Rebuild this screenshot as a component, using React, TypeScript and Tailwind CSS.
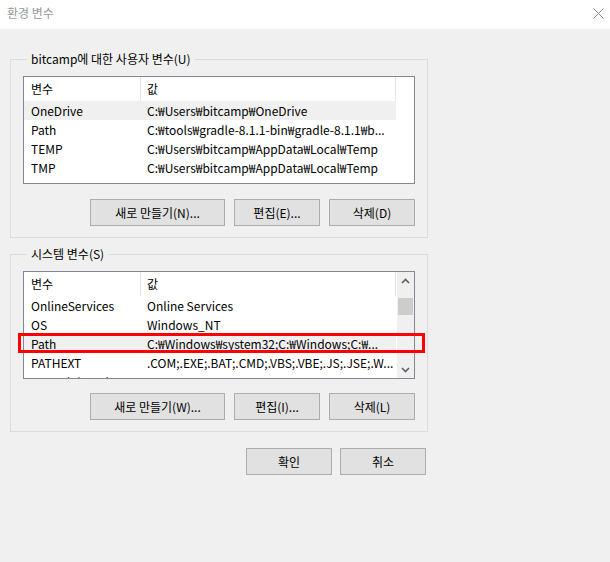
import * as React from "react";

type Row = [string, string];

const userVars: Row[] = [
  ["OneDrive", "C:₩Users₩bitcamp₩OneDrive"],
  ["Path", "C:₩tools₩gradle-8.1.1-bin₩gradle-8.1.1₩b..."],
  ["TEMP", "C:₩Users₩bitcamp₩AppData₩Local₩Temp"],
  ["TMP", "C:₩Users₩bitcamp₩AppData₩Local₩Temp"],
];

const systemVars: Row[] = [
  ["OnlineServices", "Online Services"],
  ["OS", "Windows_NT"],
  ["Path", "C:₩Windows₩system32;C:₩Windows;C:₩..."],
  ["PATHEXT", ".COM;.EXE;.BAT;.CMD;.VBS;.VBE;.JS;.JSE;.W..."],
  ["PSModulePath", ""],
];

function Chevron({ up }: { up?: boolean }) {
  return (
    <svg width="9" height="6" viewBox="0 0 9 6" fill="none">
      <path
        d={up ? "M1 5 L4.5 1.5 L8 5" : "M1 1 L4.5 4.5 L8 1"}
        stroke="#606060"
        strokeWidth={1.6}
      />
    </svg>
  );
}

function VarList({
  rows,
  highlight,
  scroll = false,
}: {
  rows: Row[];
  highlight: number;
  scroll?: boolean;
}) {
  return (
    <div className="flex h-[108px] w-[392px] overflow-hidden border border-[#828790] bg-white">
      <div className="flex w-[372px] flex-col">
        <div className="flex h-[24px] shrink-0">
          <div className="flex w-[117px] items-center border-r border-[#e5e5e5] pl-[7px]">변수</div>
          <div className="flex flex-1 items-center border-r border-[#e5e5e5] pl-[6px]">값</div>
        </div>
        {rows.map((r, i) => (
          <div
            key={i}
            className={`flex h-[19px] shrink-0 items-center whitespace-nowrap ${
              i === highlight ? "bg-[#f0f0f0]" : ""
            }`}
          >
            <div className="w-[117px] overflow-hidden pl-[7px]">{r[0]}</div>
            <div className="flex-1 overflow-hidden pl-[6px]">{r[1]}</div>
          </div>
        ))}
      </div>
      {scroll && (
        <div className="ml-[1px] flex w-[17px] flex-col bg-[#f0f0f0]">
          <div className="flex h-[17px] items-center justify-center">
            <Chevron up />
          </div>
          <div className="flex-1">
            <div className="mx-[1px] mt-[9px] h-[17px] bg-[#cdcdcd]" />
          </div>
          <div className="flex h-[17px] items-center justify-center">
            <Chevron />
          </div>
        </div>
      )}
    </div>
  );
}

function Btn({ w, children }: { w: string; children: React.ReactNode }) {
  return (
    <div
      className={`flex h-[27px] ${w} items-center justify-center border border-[#adadad] bg-[#e1e1e1]`}
    >
      {children}
    </div>
  );
}

export default function App() {
  return (
    <div className="flex h-[562px] w-[610px] flex-col bg-[#f0f0f0] font-['Noto_Sans_CJK_KR',sans-serif] text-[12px] leading-[16px] text-black">
      <div className="flex h-[29px] shrink-0 items-start justify-between bg-white">
        <div className="pl-[7px] pt-[5px] text-[#999999]">환경 변수</div>
        <svg className="mr-[6px] mt-[8px]" width="11" height="11" viewBox="0 0 11 11">
          <path d="M0.5 0.5 L10.5 10.5 M10.5 0.5 L0.5 10.5" stroke="#8a8a8a" strokeWidth={1} />
        </svg>
      </div>

      <fieldset className="ml-[10px] mt-[22px] w-[418px] border border-[#dcdcdc] pb-[11px] pl-[12px] pt-[9px]">
        <legend className="ml-[4px] px-[4px]">bitcamp에 대한 사용자 변수(U)</legend>
        <VarList rows={userVars} highlight={0} />
        <div className="mt-[15px] flex w-[392px] justify-end gap-[9px]">
          <Btn w="w-[135px]">새로 만들기(N)...</Btn>
          <Btn w="w-[86px]">편집(E)...</Btn>
          <Btn w="w-[86px]">삭제(D)</Btn>
        </div>
      </fieldset>

      <fieldset className="ml-[10px] mt-[8px] w-[418px] border border-[#dcdcdc] pb-[11px] pl-[12px] pt-[9px]">
        <legend className="ml-[4px] px-[4px]">시스템 변수(S)</legend>
        <div className="relative">
          <VarList rows={systemVars} highlight={2} scroll />
          <div className="absolute left-[-5px] top-[62px] h-[20px] w-[407px] border-[3px] border-[#ff0000]" />
        </div>
        <div className="mt-[14px] flex w-[392px] justify-end gap-[9px]">
          <Btn w="w-[135px]">새로 만들기(W)...</Btn>
          <Btn w="w-[86px]">편집(I)...</Btn>
          <Btn w="w-[86px]">삭제(L)</Btn>
        </div>
      </fieldset>

      <div className="ml-[246px] mt-[16px] flex gap-[8px]">
        <Btn w="w-[86px]">확인</Btn>
        <Btn w="w-[86px]">취소</Btn>
      </div>
    </div>
  );
}
